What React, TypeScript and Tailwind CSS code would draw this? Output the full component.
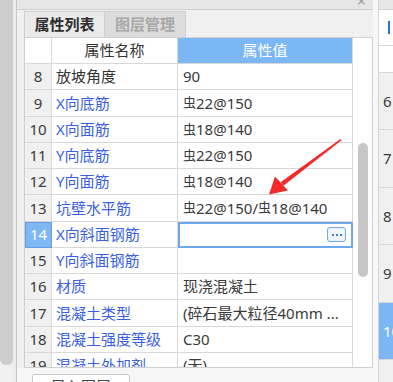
type Row = { n: number; name: string; value: string; plain?: boolean };

const rows: Row[] = [
  { n: 8, name: '放坡角度', value: '90', plain: true },
  { n: 9, name: 'X向底筋', value: '虫22@150' },
  { n: 10, name: 'X向面筋', value: '虫18@140' },
  { n: 11, name: 'Y向底筋', value: '虫22@150' },
  { n: 12, name: 'Y向面筋', value: '虫18@140' },
  { n: 13, name: '坑壁水平筋', value: '虫22@150/虫18@140' },
  { n: 14, name: 'X向斜面钢筋', value: '' },
  { n: 15, name: 'Y向斜面钢筋', value: '' },
  { n: 16, name: '材质', value: '现浇混凝土' },
  { n: 17, name: '混凝土类型', value: '(碎石最大粒径40mm ...' },
  { n: 18, name: '混凝土强度等级', value: 'C30' },
  { n: 19, name: '混凝土外加剂', value: '(无)' },
];

const SELECTED = 14;

export default function App() {
  return (
    <div className="relative flex h-[382px] w-[393px] overflow-hidden bg-[#f0f0f0] font-['Noto_Sans','Noto_Sans_CJK_SC',sans-serif] text-[15px] text-[#333]">
      <LeftEdge />
      <PropertyPanel />
      <div className="w-[6px] shrink-0 border-r border-[#d4d4d4] bg-[#f7f7f7]" />
      <RightEdge />
      <Arrow />
    </div>
  );
}

function LeftEdge() {
  return (
    <div className="flex w-[17px] shrink-0">
      <div className="w-[13px]">
        <div className="h-[365px] w-full rounded-b-[6px] bg-[#cdcdcd]" />
      </div>
      <div className="w-[4px] border-r border-[#c8c8c8] bg-[#ececec]" />
    </div>
  );
}

function PropertyPanel() {
  return (
    <div className="flex h-[382px] w-[356px] shrink-0 flex-col overflow-hidden">
      {/* title bar */}
      <div className="flex h-[10px] shrink-0 items-start justify-end overflow-hidden border-b border-[#d0d0d0] bg-[#e6e6e6] pr-[7px]">
        <span className="-mt-[7px] text-[16px] leading-none text-[#9a9a9a]">×</span>
      </div>

      {/* tabs */}
      <div className="flex h-[27px] shrink-0 items-end pl-[7px]">
        <div className="flex h-[26px] w-[81px] items-center justify-center border-x border-t border-[#cfcfcf] bg-[#eaeaea] font-bold text-[#2e2e2e]">
          属性列表
        </div>
        <div className="flex h-[26px] w-[81px] items-center justify-center border-r border-t border-[#cfcfcf] bg-[#dcdcdc] font-bold text-[#a8a8a8]">
          图层管理
        </div>
      </div>

      {/* grid */}
      <div className="ml-[7px] flex h-[331px] w-[349px] shrink-0 overflow-hidden border border-[#cfcfcf] bg-white">
        <div className="flex w-[328px] flex-col">
          <div className="grid h-[26px] shrink-0 grid-cols-[27px_126px_175px] border-b border-[#d8d8d8]">
            <div className="border-r border-[#d8d8d8]" />
            <div className="flex items-center justify-center border-r border-[#d8d8d8] text-[#333]">属性名称</div>
            <div className="flex items-center justify-center border-r border-[#d8d8d8] bg-[#7cb7f5] text-white">属性值</div>
          </div>
          {rows.map((r) => (
            <PropRow key={r.n} row={r} />
          ))}
        </div>
        <div className="w-[19px] shrink-0 bg-white pl-[5px]">
          <div className="mt-[105px] h-[134px] w-[10px] rounded-full bg-[#c6c6c6]" />
        </div>
      </div>

      {/* bottom toolbar */}
      <div className="min-h-0 flex-1 overflow-hidden bg-[#f6f6f6]">
        <div className="ml-[15px] mt-[6px] flex h-[26px] w-[98px] items-start justify-center rounded-[3px] border border-[#c8c8c8] bg-white text-[#444]">
          导入图层
        </div>
      </div>
    </div>
  );
}

function PropRow({ row }: { row: Row }) {
  const selected = row.n === SELECTED;
  return (
    <div className="grid h-[26.25px] shrink-0 grid-cols-[27px_126px_175px]">
      <div
        className={
          selected
            ? 'flex items-center justify-center border border-[#5d9de6] bg-[#7eb7f2] text-white'
            : 'flex items-center justify-center border-b border-r border-[#d8d8d8] bg-[#f0f0f0] text-[#3a3a3a]'
        }
      >
        {row.n}
      </div>
      <div
        className={
          'flex items-center overflow-hidden whitespace-nowrap border-b border-r border-[#d8d8d8] pl-[4px] ' +
          (row.plain ? 'text-[#333]' : 'text-[#3a5fe4]')
        }
      >
        {row.name}
      </div>
      {selected ? (
        <div className="flex items-center justify-end border-2 border-[#6ea8ea] bg-white pr-[5px]">
          <span className="flex h-[15px] w-[19px] items-center justify-center gap-[2px] rounded-[3px] border border-[#6ea8ea] bg-[#eef5fd]">
            <i className="h-[2px] w-[2px] bg-[#3b7fd8]" />
            <i className="h-[2px] w-[2px] bg-[#3b7fd8]" />
            <i className="h-[2px] w-[2px] bg-[#3b7fd8]" />
          </span>
        </div>
      ) : (
        <div className="flex items-center overflow-hidden whitespace-nowrap border-b border-r border-[#d8d8d8] pl-[5px] text-[#3a3a3a]">
          {row.value.split(/(虫)/).map((part, i) =>
            part === '虫' ? (
              <span key={i} className="text-[13px] leading-none">
                虫
              </span>
            ) : (
              <span key={i}>{part}</span>
            ),
          )}
        </div>
      )}
    </div>
  );
}

function RightEdge() {
  const nums = [6, 7, 8, 9, 10, 11];
  return (
    <div className="flex w-[14px] shrink-0 flex-col overflow-hidden bg-white">
      <div className="h-[10px] shrink-0 border-b border-[#d0d0d0] bg-[#e6e6e6]" />
      <div className="flex h-[36px] shrink-0 items-center border-b border-[#d8d8d8] pl-[9px]">
        <div className="h-[13px] w-[2px] bg-[#2f6fe0]" />
      </div>
      <div className="h-[27px] shrink-0 border-b border-[#d8d8d8]" />
      {nums.map((n) => (
        <div
          key={n}
          className={
            n === 10
              ? 'flex h-[57.4px] shrink-0 items-center border-b border-[#d8d8d8] bg-[#7cb6f4] pl-[4px] text-white'
              : 'flex h-[57.4px] shrink-0 items-center border-b border-[#d8d8d8] bg-[#f0f0f0] pl-[4px] text-[#3a3a3a]'
          }
        >
          {n}
        </div>
      ))}
    </div>
  );
}

function Arrow() {
  return (
    <svg
      className="pointer-events-none absolute left-0 top-0"
      width="393"
      height="382"
      viewBox="0 0 393 382"
      aria-hidden
    >
      <polygon points="340.5,138.9 341.6,140.2 283.4,185.8 280.6,182.2" fill="#f42a2a" />
      <polygon points="269,194.5 275,176.5 288,190.5" fill="#f42a2a" />
    </svg>
  );
}
